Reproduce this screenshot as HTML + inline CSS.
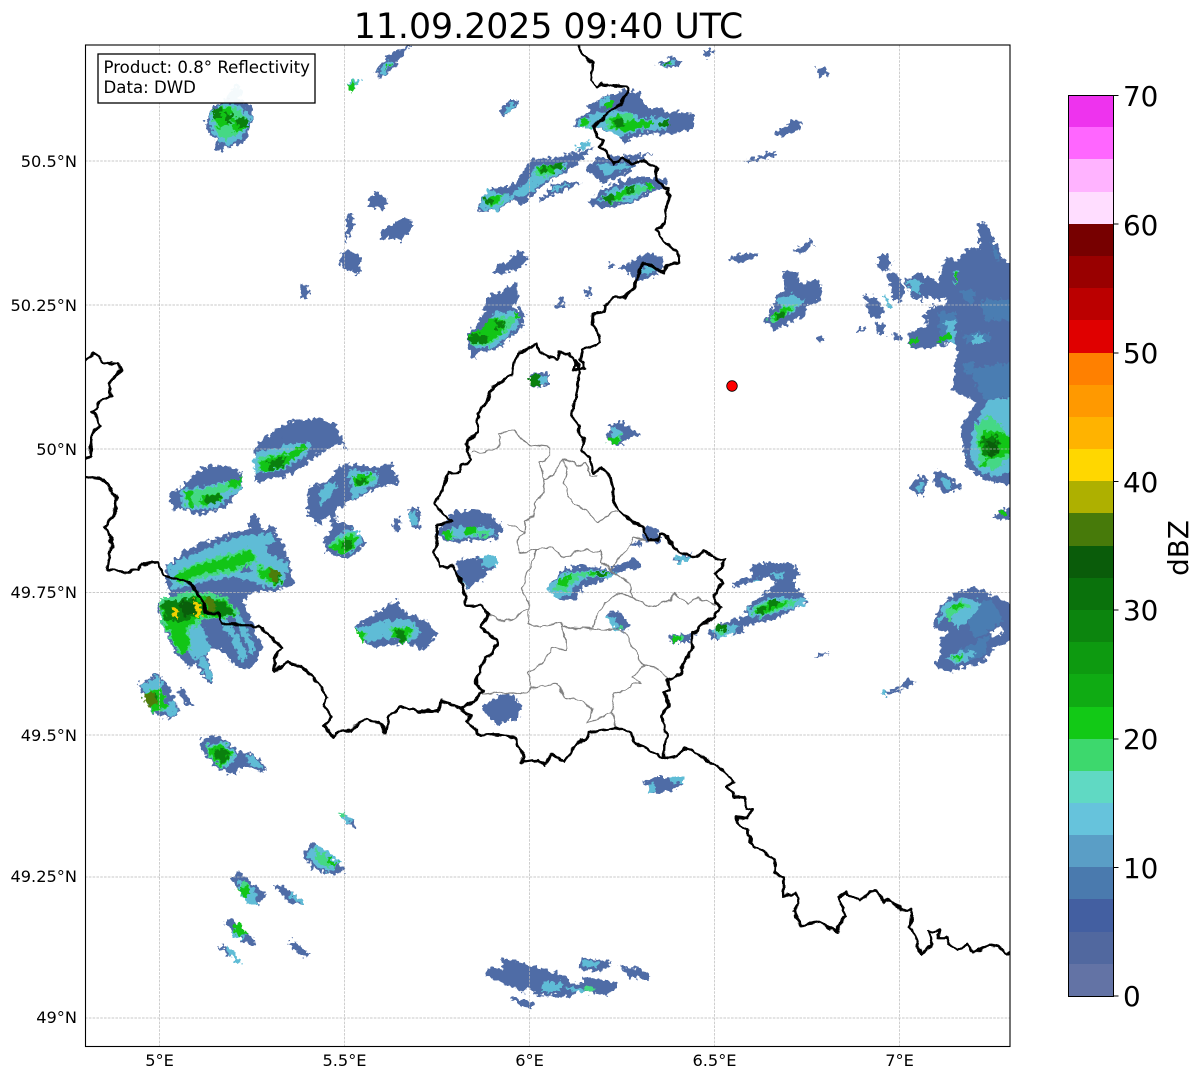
<!DOCTYPE html>
<html><head><meta charset="utf-8"><style>
html,body{margin:0;padding:0;background:#fff;width:1202px;height:1081px;overflow:hidden}
svg{display:block}
text{font-family:"DejaVu Sans","Liberation Sans",sans-serif;fill:#000}
.g{stroke:#b9b9b9;stroke-width:.7;stroke-dasharray:2.6 1.2;fill:none}
.t{font-size:16.6px}
.k{font-size:16.2px}
.cb{font-size:27.8px}
.bd{fill:none;stroke:#000;stroke-width:2.8;stroke-linejoin:round;stroke-linecap:round}
.pr{fill:none;stroke:#808080;stroke-width:1.25;stroke-linejoin:round}
</style></head><body>
<svg width="1202" height="1081" viewBox="0 0 1202 1081" xmlns="http://www.w3.org/2000/svg">
<defs>
<clipPath id="c"><rect x="85.5" y="45" width="924.5" height="1001.5"/></clipPath>
<filter id="rad" filterUnits="userSpaceOnUse" x="70" y="30" width="960" height="1030" color-interpolation-filters="sRGB">
<feTurbulence type="fractalNoise" baseFrequency=".22" numOctaves="2" seed="4" result="n"/>
<feDisplacementMap in="SourceGraphic" in2="n" scale="10" xChannelSelector="R" yChannelSelector="G"/>
</filter>
<filter id="wig" filterUnits="userSpaceOnUse" x="70" y="30" width="960" height="1030" color-interpolation-filters="sRGB">
<feTurbulence type="fractalNoise" baseFrequency=".1" numOctaves="2" seed="7" result="n"/>
<feDisplacementMap in="SourceGraphic" in2="n" scale="7" xChannelSelector="R" yChannelSelector="G"/>
</filter>
</defs>
<rect width="1202" height="1081" fill="#fff"/>
<text x="548.5" y="38" font-size="34.7" text-anchor="middle">11.09.2025 09:40 UTC</text>
<g clip-path="url(#c)">
<g filter="url(#rad)">
<!-- blue layer -->
<path fill="#4f6ca6" d="M205 123 213 107 232 97 253 107 253 120 245 142 228 147 220 152 215 150 217 140 210 137Z
M376 72 385 58 398 50 412 45 400 58 392 70 380 80Z
M368 200 378 191 388 200 384 210 370 206Z M348 214 354 214 352 230 347 242 345 240Z
M341 252 348 250 360 255 360 272 356 274 342 268 340 262Z M301 285 309 284 307 299 301 299Z
M380 232 392 224 405 217 412 222 412 230 400 240 390 238 382 240Z
M500 110 510 100 522 100 515 108 503 117Z
M588 105 605 97 623 90 640 92 645 108 660 107 668 112 693 113 694 122 690 130 663 135 647 133 623 143 620 135 593 127 575 128 577 118 590 112Z
M477 213 480 200 492 187 508 187 520 177 530 160 557 157 577 152 593 147 583 160 567 172 547 182 533 195 523 205 512 200 500 210 483 210Z
M538 200 548 192 552 183 567 182 582 182 567 190 550 197 540 202Z
M587 168 597 157 613 157 633 155 653 152 647 157 633 165 630 172 602 183 588 172Z
M588 203 600 190 617 182 640 177 653 177 668 180 667 185 653 192 633 203 603 208Z
M657 63 672 57 680 62 680 66 667 68Z M703 50 715 50 708 57 703 57Z
M816 69 824 68 830 73 828 77 818 75Z M773 132 785 128 790 121 802 120 800 130 790 133 778 137Z
M744 160 760 157 770 152 778 153 765 159 750 162Z M730 258 745 253 758 253 752 260 735 263Z
M792 252 803 245 810 240 814 245 800 254Z
M763 322 772 310 775 295 785 290 783 270 797 272 800 285 815 278 822 285 820 300 808 305 805 315 785 325 775 330Z
M817 337 824 336 824 341 818 342Z
M618 269 630 263 642 255 650 253 662 257 663 270 650 278 633 280 630 273Z M607 264 613 263 613 267 607 268Z
M585 290 592 287 590 298 586 298Z M554 308 560 297 564 298 562 307Z
M493 275 498 265 510 260 518 250 530 257 520 267 508 273Z
M467 333 480 322 487 297 497 292 508 287 517 283 518 300 513 307 525 312 522 330 510 337 498 350 477 353 475 359 472 358 468 347Z
M530 374 548 372 548 386 530 387Z
M607 437 612 423 623 423 642 435 633 438 628 438 620 447 610 443Z
M437 532 452 513 472 510 492 515 503 528 495 540 475 540 450 543 442 540Z
M457 560 480 557 497 557 497 567 487 572 483 580 465 588 457 577Z
M547 587 562 570 583 565 610 570 633 557 643 567 620 572 600 582 583 587 577 600 560 600Z
M605 615 617 610 631 625 622 632 617 627Z M642 532 648 525 660 530 660 543 647 543Z
M628 543 642 540 640 547 630 547Z M673 558 693 553 687 562 678 563Z
M669 635 697 633 688 643 672 643Z
M483 707 502 693 515 695 522 710 518 718 497 725 485 715Z
M642 782 657 777 683 777 683 782 675 790 660 793 648 792 647 785Z
M752 568 757 563 790 563 800 573 793 583 803 593 808 602 788 612 780 617 743 627 743 633 723 635 717 642 707 632 715 626 745 615 747 608 768 590 777 582 767 577 752 582 733 587 733 583 752 577Z
M814 658 823 652 828 653 822 657Z M880 693 900 687 910 677 915 682 907 688 887 695Z
M933 627 938 607 957 592 977 587 992 595 1018 607 1018 637 993 650 983 663 947 672 933 665 942 653 938 643 948 633Z
M978 223 985 222 1003 258 1018 270 1018 485 997 483 980 477 967 467 962 440 960 427 970 413 975 402 952 390 957 353 955 343 927 348 910 347 908 333 927 327 923 315 933 307 920 300 912 298 905 280 920 272 937 282 947 257 957 262 968 247 980 250Z
M878 256 885 254 892 262 885 272 878 268Z M888 275 897 273 905 290 900 302 893 300Z
M863 295 875 297 885 310 878 320 870 315Z M855 329 866 327 866 331 855 333Z M875 322 885 324 885 335 877 334Z M893 332 900 333 900 340 894 340Z
M910 487 920 475 928 480 923 495 915 495Z M933 470 943 472 963 487 947 493 935 487Z
M993 517 1003 508 1018 507 1018 518 1000 520Z
M255 482 255 450 260 440 273 432 288 422 318 418 335 425 347 450 338 443 318 455 302 467 285 477 272 478 260 483Z
M170 492 178 490 190 478 202 467 220 465 240 470 243 487 235 495 228 507 198 515 180 508 173 510Z
M307 513 308 487 328 482 338 467 348 463 375 467 390 463 400 483 378 488 348 503 332 513 318 525Z M328 513 334 510 338 527 332 527Z
M323 542 335 523 348 523 367 543 352 557 338 557 327 552Z
M167 567 188 548 225 535 248 530 252 512 258 515 262 530 272 525 285 547 295 585 282 590 258 592 248 595 243 600 262 647 253 668 248 670 235 667 225 653 213 647 207 653 213 682 208 682 195 663 190 668 175 653 158 613 157 603 170 597 165 573Z
M138 685 158 673 165 680 175 700 180 712 170 718 155 715 142 693Z M178 690 183 687 192 705 187 708Z
M355 627 368 618 385 608 397 600 405 613 425 620 438 635 423 650 405 643 375 648 365 643Z
M198 742 212 735 225 740 240 752 255 755 268 770 262 773 245 765 235 775 220 770 205 755Z
M392 520 400 517 401 530 395 532Z M408 510 415 505 422 515 420 528 412 528Z
M343 812 356 824 353 829 345 820Z
M301 856 313 843 347 870 342 872 328 875 323 872 313 868Z
M231 879 239 871 265 895 258 905 252 905 240 893Z M274 886 277 883 306 902 303 904 288 902Z
M224 922 229 918 257 942 253 947 240 940Z M219 947 221 945 232 954 229 956Z
M288 943 293 940 310 955 307 959 300 955Z
M485 975 488 967 502 970 503 958 563 975 572 983 582 985 583 977 617 982 615 991 603 995 577 990 570 997 537 995 527 987 525 993 497 980Z
M511 1000 513 997 533 1003 532 1010Z M578 968 582 957 611 962 609 967 598 972Z M620 967 640 968 650 975 648 980 630 977Z"/>
<!-- faint part behind legend -->
<path fill="#5fbcd6" d="M225 100 235 85 242 88 240 103Z"/>
<!-- white holes -->
<path fill="#fff" d="M922 297 947 300 945 306 927 305Z M995 300 1005 302 1003 308 997 307Z M990 632 1001 626 1004 632 994 638Z M975 650 981 647 978 653Z"/>
<!-- mid blue -->
<path fill="#4a7db2" d="M962 290 975 290 975 303 964 303Z M963 333 990 333 990 343 965 343Z M963 363 975 363 975 373 965 373Z M938 313 955 313 955 343 940 343Z M980 300 1018 300 1018 320 985 320Z M970 370 1018 360 1018 395 985 400Z M990 240 1000 255 996 262Z M963 610 990 600 1005 620 975 640Z M960 650 990 635 985 655 965 662Z"/>
<!-- teal layer -->
<path fill="#5fbcd6" d="M211 112 225 103 240 105 252 118 243 138 228 146 218 140 209 125Z
M347 85 358 77 361 81 350 92Z M378 72 388 60 393 62 385 75Z
M508 105 516 103 510 112 504 114Z
M578 120 600 112 625 110 640 118 670 118 665 130 640 130 623 137 600 128 578 127Z M600 100 610 97 612 105 600 108Z
M574 147 590 140 590 146 578 150Z
M478 208 488 190 510 195 530 180 533 167 567 162 563 172 543 182 530 193 510 200 497 210Z
M552 186 570 184 560 190 552 192Z
M597 165 620 163 632 167 605 175Z
M597 202 610 190 640 182 655 187 633 200Z
M663 62 674 60 676 65 665 67Z
M775 300 790 295 805 300 790 315Z M640 268 655 265 655 272 642 275Z
M470 333 487 327 493 313 517 312 520 323 507 337 493 348 475 348Z
M537 375 546 375 546 385 538 385Z
M611 428 622 428 620 440 611 442Z
M441 535 452 527 490 527 497 535 452 540Z
M480 557 497 557 497 567 483 567Z M457 575 463 580 468 588 460 582Z
M547 587 563 573 590 570 617 572 610 578 583 578 567 597 555 597Z
M606 616 612 615 620 630 615 630Z
M675 555 690 557 690 562 678 563Z M710 628 740 625 733 635 717 638Z
M648 785 655 782 655 792 648 792Z M670 777 683 777 683 782 670 782Z
M747 610 770 598 808 598 803 605 777 613 760 618 748 615Z M750 580 760 577 755 583Z M770 573 785 573 780 580Z
M880 693 886 691 887 695Z M937 625 943 605 963 597 983 602 970 620 957 628 947 615Z M945 658 968 650 975 655 957 665Z
M908 280 920 280 920 292 910 292Z M882 295 885 294 893 308 890 309Z M945 320 955 320 955 343 948 343Z M953 270 958 270 958 283 955 283Z M972 335 985 335 985 343 972 343Z
M973 430 987 400 1018 397 1018 470 993 477 977 470 968 453Z
M915 490 920 482 925 484 921 492Z M942 478 950 480 952 488 944 488Z
M258 452 292 443 312 443 305 457 288 467 272 472 255 473 253 460Z
M180 490 212 485 242 478 242 488 227 498 218 508 198 510 182 508Z
M348 470 378 473 378 483 352 500Z M318 490 335 480 336 490 322 505Z M408 515 416 510 418 525 412 525Z
M330 543 345 530 358 530 362 543 352 553 338 555Z
M167 567 202 550 242 535 272 533 288 567 282 587 262 587 248 580 228 577 198 583 172 590Z
M218 617 226 615 248 655 242 662Z M232 615 240 613 256 650 252 655Z M198 660 205 655 213 680 208 680Z M180 625 200 620 212 650 196 660 185 650Z
M140 685 157 676 165 682 152 695 146 695Z M162 710 175 700 178 712 170 716Z
M357 628 385 620 412 620 422 633 408 643 385 637 365 643Z
M205 745 225 742 238 755 225 770 212 760Z M245 755 255 757 264 770 250 765Z
M338 813 343 812 352 820 349 824Z
M306 855 318 845 340 862 330 872 318 868Z M326 872 330 870 328 875Z
M240 880 255 888 258 905 250 905 238 892Z M290 892 306 902 303 904 290 898Z
M228 945 241 962 238 964 226 950Z M237 925 245 935 240 940 232 935Z
M542 982 562 982 562 992 543 992Z M566 986 583 989 583 992 568 990Z M582 960 600 963 598 968 584 966Z"/>
<!-- blue patches over teal -->
<path fill="#4f6ca6" d="M218 580 235 578 240 595 225 597Z M250 580 262 585 258 592 250 590Z M265 545 280 540 284 560 270 555Z M205 590 218 590 222 612 208 606Z M238 560 248 556 250 572 240 572Z M272 440 282 436 284 446 274 448Z M225 640 232 636 240 660 232 660Z"/>
<!-- light green / aqua -->
<path fill="#45d885" d="M212 115 224 105 238 108 249 120 235 136 224 141 216 130Z M353 82 357 80 354 88Z
M580 124 590 122 590 126 582 127Z M608 118 630 112 636 122 620 130 606 128Z
M484 203 505 192 500 204 490 207Z M533 172 560 163 560 170 545 178Z
M605 199 632 186 650 186 652 190 630 196 612 204Z
M768 318 785 306 798 305 785 316 772 324Z M470 338 490 330 498 318 515 316 516 323 500 336 488 346 472 346Z
M612 438 620 435 620 443 612 442Z
M444 532 452 530 455 538 447 540Z M468 530 490 530 488 537 470 535Z
M552 590 563 578 580 572 610 573 600 577 580 576 565 592Z M619 625 625 627 620 630Z M672 636 685 635 682 642 674 642Z
M713 630 728 627 722 635Z M750 610 770 600 800 600 780 610 760 617Z
M945 610 962 600 970 606 955 612 950 622Z M950 658 965 654 958 662Z
M975 425 990 415 1005 430 1018 450 995 470 980 465Z
M258 458 290 452 305 445 305 452 288 462 270 470 258 470Z
M184 492 240 481 240 487 218 495 205 507 186 506Z M352 478 375 475 372 482 358 488Z
M328 545 345 533 358 534 354 550 338 554Z
M178 570 205 560 250 548 258 560 236 572 205 577 180 585Z M255 565 275 568 285 584 273 585 258 578Z
M160 600 195 590 225 596 240 613 225 618 205 620 188 630 192 650 180 655 160 618Z
M142 693 160 687 168 707 155 713Z M358 630 364 632 368 642 362 640Z M390 627 416 627 408 642 392 638Z
M205 746 222 744 234 755 222 768 210 758Z
M338 813 343 812 347 816 343 818Z M315 850 325 855 330 868 318 862Z M243 880 250 885 248 892 242 888Z M585 985 595 988 593 993 582 990Z"/>
<!-- green -->
<path fill="#12c516" d="M214 113 224 106 232 110 226 125 218 128Z M232 118 246 118 245 130 234 132Z
M347 86 353 83 355 87 350 92Z M387 63 390 65 386 70Z
M580 120 586 118 590 123 582 127Z M610 122 618 112 625 122 640 119 654 121 650 127 625 132 612 127Z
M604 104 612 100 612 106 605 108Z
M484 203 490 197 502 195 498 203 491 205Z M536 168 562 162 564 167 553 173 540 173Z
M604 197 620 192 634 185 630 192 617 200 604 203Z M648 183 653 186 652 190 648 189Z
M668 61 672 61 671 65 668 65Z M770 317 785 307 792 308 778 320Z
M470 333 478 330 495 317 508 323 503 333 488 343 470 343Z M514 313 518 313 518 320 515 320Z
M608 440 618 437 620 444 612 444Z
M443 532 450 530 452 538 446 540Z M464 527 476 527 476 534 465 534Z
M555 582 573 573 567 588Z M587 572 613 573 602 577Z
M672 637 680 636 678 642 673 642Z
M752 611 770 602 790 602 777 609 760 615Z
M948 607 960 602 964 606 952 610Z M952 657 962 654 958 660Z
M978 440 987 430 1000 433 1018 440 1018 450 997 458 984 459Z M980 465 992 456 986 466Z M910 340 918 338 918 342 911 344Z M938 337 952 333 952 338 939 342Z M955 272 958 274 958 283 955 280Z M1000 510 1005 509 1005 516 1001 516Z
M262 460 288 453 305 443 307 450 288 462 282 468 262 472 257 465Z
M200 497 220 492 222 502 202 505Z M186 491 192 490 193 507 187 507Z M228 480 242 477 241 486 230 488Z
M352 477 373 473 368 482 355 487Z M330 548 345 537 358 536 352 550 340 555Z
M186 570 205 563 232 557 250 550 255 560 232 570 205 573 190 578Z M258 568 272 569 283 582 273 584 260 577Z M175 575 190 570 190 580 176 582Z
M160 606 195 596 226 600 236 613 222 618 202 617 186 628 190 648 182 656 164 620Z
M144 693 160 688 167 706 155 712Z
M394 628 413 627 405 643 392 638Z M357 631 362 632 367 642 362 642Z M208 748 225 745 232 755 222 767 212 758Z
M329 857 337 863 333 868 327 863Z M237 890 247 886 251 893 245 898Z M233 926 240 923 246 933 238 938Z"/>
<!-- dark green -->
<path fill="#0a800e" d="M213 108 222 108 222 118 213 118Z M224 113 232 113 232 122 224 122Z M236 118 248 118 248 128 238 128Z
M614 120 622 118 626 126 616 128Z M660 122 668 120 668 126 660 127Z
M485 198 492 198 492 204 485 204Z M550 165 563 162 562 170 553 172Z M540 168 548 166 548 172 541 173Z
M603 197 615 194 615 202 605 202Z M626 187 634 185 632 192 626 192Z
M665 62 669 61 669 65 666 65Z M775 315 783 310 785 316 778 320Z
M468 335 487 335 487 343 470 343Z M495 320 507 322 507 328 496 328Z
M530 376 540 375 540 386 530 386Z
M596 572 606 572 604 577 597 577Z
M715 625 727 625 727 631 716 631Z M757 608 765 608 765 615 758 615Z M768 600 778 600 778 608 769 608Z
M982 438 997 436 1000 450 992 458 983 455Z
M268 462 285 456 285 466 270 470Z M205 497 220 493 220 503 206 504Z M356 480 368 476 366 482 358 486Z M342 540 352 540 352 548 344 550Z
M270 572 278 572 282 583 274 584Z M162 602 198 597 205 613 182 622 165 620Z M208 597 225 603 235 613 222 617 208 612Z
M395 630 405 630 405 642 397 640Z M213 750 225 748 230 758 220 765Z M150 695 157 695 157 703 152 703Z"/>
<!-- very dark / olive / yellow -->
<path fill="#0a5e0b" d="M986 442 996 440 998 452 990 457Z M180 602 195 600 198 612 184 618Z"/>
<path fill="#4d7d0a" d="M205 597 217 600 214 612 208 610Z M143 693 154 693 157 703 148 706Z M268 570 277 570 280 582 273 582Z"/>
<path fill="#f0d000" d="M171 607 176 607 178 618 173 618Z M193 600 198 600 202 617 197 617Z"/>
</g>
<!-- grid -->
<path class="g" d="M159.5 45V1047M344.5 45V1047M529.5 45V1047M714.5 45V1047M899.5 45V1047M85 161H1010M85 305H1010M85 449H1010M85 592.5H1010M85 735H1010M85 877H1010M85 1018H1010"/>
<g filter="url(#wig)">
<!-- provinces -->
<g class="pr">
<path d="M472 453 485 452 497 448 500 438 498 435 515 429 523 442 538 447 550 448 550 455 540 462 542 473 546 480 543 493 535 503 533 515 526 522 525 533 507 523"/>
<path d="M546 480 557 470 564 457 568 460 578 466 587 463 590 475 597 475"/>
<path d="M564 457 567 470 564 485 573 503 587 512 598 523 607 515 617 513"/>
<path d="M525 533 518 538 519 553 537 549 550 547 563 557 583 550 600 551 602 562 610 570 620 577 630 583 632 597 617 595 605 603 597 617 592 628"/>
<path d="M610 570 620 557 628 547 633 538 645 540"/>
<path d="M537 549 535 560 527 573 522 588 528 603 528 623 542 627 560 623 563 628 592 629 617 630 625 632 633 647 637 658 644 665 655 667 668 678"/>
<path d="M488 615 505 622 527 610"/>
<path d="M632 597 648 607 670 600 675 593 688 605 697 598 715 605"/>
<path d="M562 628 565 640 566 651 553 647 543 663 528 673 532 688 527 692 517 695 500 692 482 695"/>
<path d="M532 688 555 683 567 698 583 702 592 710 588 723 612 713 617 728"/>
<path d="M644 665 633 677 640 683 633 685 615 695 612 713"/>
</g>
<!-- borders -->
<g class="bd">
<path d="M578 46 583 55 592 63 593 73 592 80 597 88 602 83 617 86 628 87 628 93 620 103 612 110 603 118 594 127 597 137 603 140 600 147 607 153 613 164 623 158 633 163 643 161 658 168 655 180 668 188 669 200 665 210 666 217 657 230 665 242 678 253 679 263 667 267 663 273 650 265 643 264 638 273 635 287 625 297 617 297 605 305 603 312 593 315 592 323 598 332 600 343 590 347 583 350 580 360 585 368 573 370 577 362 580 373 575 397 572 415 579 430 583 437 582 450 590 458 593 472 600 468 612 480 612 495 617 510 633 522 643 525 648 540 658 540 660 535 667 537 678 553 697 557 703 552 720 560 725 558 722 567 717 573 722 583 715 593 715 603 720 608 715 615 693 633 692 650 680 673 668 680 670 690 662 693 670 703 662 717 666 737 665 757"/>
<path d="M537 345 518 352 513 373 492 388 487 405 478 412 477 433 465 443 472 460 462 465 460 472 448 473 443 490 434 505 448 517 450 523 438 525 437 537 435 552 440 567 452 567 462 583 467 605 480 605 488 615 482 627 497 642 493 655 485 658 475 683 483 692 470 705 460 708 442 700 437 712 420 712"/>
<path d="M537 345 540 353 548 357 557 360 560 352 570 353 575 362"/>
<path d="M460 708 470 715 468 723 482 735 500 735 515 738 520 747 522 762 537 760 545 765 552 755 565 762 577 742 587 738 590 732 617 728 628 732 638 745 653 753 665 758 677 755 687 748 700 755 710 762 725 772 735 781 727 787 735 797 745 798 747 808 752 810 747 819 738 817 738 823 748 830 748 837 757 847 775 859 774 872 783 877 784 895 795 893 799 902 793 912 802 925 818 923 837 932 842 920 847 917 843 907 838 898 847 893 860 900 870 892 877 892 885 903 890 900 902 910 912 910 910 927 917 943 920 955 925 952 933 943 929 932 940 930 938 938 945 938 957 950 967 944 973 953 988 945 1003 949 1007 953 1016 950"/>
<path d="M78 365 93 353 105 362 118 363 121 370 108 385 112 395 102 400 92 413 100 425 92 435 90 457 78 461"/>
<path d="M78 475 102 479 117 498 117 507 105 527 112 543 107 570 125 572 138 570 142 563 157 563 165 575 192 584 205 603 205 612 218 612 222 625 258 625 282 648 273 660 275 672 287 662 302 667 318 683 327 697 323 705 332 717 325 725 333 737 338 732 352 730 365 719 378 722 385 732 388 718 400 706 418 712 430 710 438 712 443 700"/>
</g>
</g>
<circle cx="732" cy="386" r="5.3" fill="#f00" stroke="#000" stroke-width=".8"/>
<rect x="98" y="54" width="217" height="49" fill="#fff" fill-opacity=".93" stroke="#000" stroke-width="1.3"/>
<text class="t" x="103.5" y="73">Product: 0.8° Reflectivity</text>
<text class="t" x="103.5" y="93">Data: DWD</text>
</g>
<rect x="85.5" y="45" width="924.5" height="1001.5" fill="none" stroke="#000" stroke-width="1.1"/>
<!-- axis labels -->
<g class="k" text-anchor="end">
<text x="77" y="167">50.5°N</text><text x="77" y="311">50.25°N</text><text x="77" y="455">50°N</text><text x="77" y="598">49.75°N</text><text x="77" y="741">49.5°N</text><text x="77" y="882">49.25°N</text><text x="77" y="1023">49°N</text>
</g>
<g class="k" text-anchor="middle">
<text x="159.5" y="1066">5°E</text><text x="344.5" y="1066">5.5°E</text><text x="529.5" y="1066">6°E</text><text x="714.5" y="1066">6.5°E</text><text x="899.5" y="1066">7°E</text>
</g>
<!-- colorbar -->
<g shape-rendering="crispEdges">
<rect x="1068.500" y="95" width="45" height="32" fill="#ee33ee"/>
<rect x="1068.500" y="127" width="45" height="32" fill="#ff66ff"/>
<rect x="1068.500" y="159" width="45" height="33" fill="#ffb3ff"/>
<rect x="1068.500" y="192" width="45" height="32" fill="#ffddff"/>
<rect x="1068.500" y="224" width="45" height="32" fill="#770000"/>
<rect x="1068.500" y="256" width="45" height="32" fill="#990000"/>
<rect x="1068.500" y="288" width="45" height="32" fill="#bb0000"/>
<rect x="1068.500" y="320" width="45" height="33" fill="#e00000"/>
<rect x="1068.500" y="353" width="45" height="32" fill="#ff8000"/>
<rect x="1068.500" y="385" width="45" height="32" fill="#ff9900"/>
<rect x="1068.500" y="417" width="45" height="32" fill="#ffb300"/>
<rect x="1068.500" y="449" width="45" height="32" fill="#ffd700"/>
<rect x="1068.500" y="481" width="45" height="32" fill="#aeb000"/>
<rect x="1068.500" y="513" width="45" height="33" fill="#477a0a"/>
<rect x="1068.500" y="546" width="45" height="32" fill="#0a5c0a"/>
<rect x="1068.500" y="578" width="45" height="32" fill="#0a720c"/>
<rect x="1068.500" y="610" width="45" height="32" fill="#0c850e"/>
<rect x="1068.500" y="642" width="45" height="32" fill="#0d9a10"/>
<rect x="1068.500" y="674" width="45" height="33" fill="#0fab13"/>
<rect x="1068.500" y="707" width="45" height="32" fill="#12c916"/>
<rect x="1068.500" y="739" width="45" height="32" fill="#3dd86d"/>
<rect x="1068.500" y="771" width="45" height="32" fill="#60d9c3"/>
<rect x="1068.500" y="803" width="45" height="32" fill="#66c3dc"/>
<rect x="1068.500" y="835" width="45" height="32" fill="#5a9ec6"/>
<rect x="1068.500" y="867" width="45" height="32" fill="#4a7aae"/>
<rect x="1068.500" y="899" width="45" height="33" fill="#435fa1"/>
<rect x="1068.500" y="932" width="45" height="32" fill="#51689f"/>
<rect x="1068.500" y="964" width="45" height="32" fill="#6373a5"/>
</g>
<rect x="1068.5" y="95.5" width="45" height="901" fill="none" stroke="#000" stroke-width="1"/>
<path stroke="#000" stroke-width="1" d="M1113.5 95.5h5M1113.5 224h5M1113.5 353h5M1113.5 481.5h5M1113.5 610h5M1113.5 739h5M1113.5 867.5h5M1113.5 996h5"/>
<g class="cb">
<text x="1123" y="106">70</text><text x="1123" y="235">60</text><text x="1123" y="363">50</text><text x="1123" y="492">40</text><text x="1123" y="620">30</text><text x="1123" y="749">20</text><text x="1123" y="878">10</text><text x="1123" y="1006">0</text>
</g>
<text class="cb" transform="translate(1188,548) rotate(-90)" text-anchor="middle">dBZ</text>
</svg>
</body></html>
